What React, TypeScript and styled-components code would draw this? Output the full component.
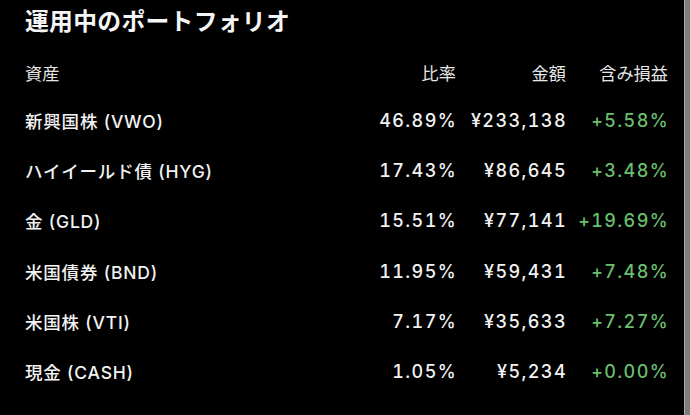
import React from "react";
import styled, { createGlobalStyle } from "styled-components";

const Global = createGlobalStyle`
  html, body {
    margin: 0;
    padding: 0;
    background: #000;
  }
  body {
    font-family: Inter, "Noto Sans CJK JP", sans-serif;
    color: #f2f2f2;
  }
`;

const Screen = styled.div`
  display: flex;
  width: 690px;
  height: 415px;
  background: #000;
  overflow: hidden;
`;

const Content = styled.main`
  flex: 1;
  padding: 6px 15px 0 25px;
`;

const ScrollTrack = styled.div`
  width: 5px;
  height: 100%;
  background: #7d7d7d;
  border-left: 1px solid #a8a8a8;
`;

const Title = styled.h1`
  margin: 0;
  font-size: 23.8px;
  line-height: 32px;
  font-weight: 700;
  color: #f5f5f5;
  letter-spacing: 0.3px;
`;

const Table = styled.div`
  margin-top: 12px;
  display: grid;
  grid-template-columns: 1fr 112px 110px 102px;
  grid-template-rows: 45px;
  grid-auto-rows: 50.3px;
  align-items: center;
`;

const HeadCell = styled.div<{ $right?: boolean }>`
  font-size: 17.2px;
  color: #e6e6e6;
  text-align: ${(p) => (p.$right ? "right" : "left")};
  padding-right: ${(p) => (p.$right ? "1px" : "0")};
  white-space: nowrap;
`;

const NameCell = styled.div`
  font-size: 17.5px;
  font-weight: 500;
  letter-spacing: 0.8px;
  color: #f2f2f2;
  white-space: nowrap;
`;

const NumCell = styled.div<{ $gain?: boolean }>`
  font-size: 18px;
  font-weight: 500;
  font-variant-numeric: tabular-nums;
  letter-spacing: 1.4px;
  text-align: right;
  white-space: nowrap;
  color: ${(p) => (p.$gain ? "#6abf6e" : "#f2f2f2")};
`;

const rows = [
  { name: "新興国株 (VWO)", ratio: "46.89%", amount: "¥233,138", gain: "+5.58%" },
  { name: "ハイイールド債 (HYG)", ratio: "17.43%", amount: "¥86,645", gain: "+3.48%" },
  { name: "金 (GLD)", ratio: "15.51%", amount: "¥77,141", gain: "+19.69%" },
  { name: "米国債券 (BND)", ratio: "11.95%", amount: "¥59,431", gain: "+7.48%" },
  { name: "米国株 (VTI)", ratio: "7.17%", amount: "¥35,633", gain: "+7.27%" },
  { name: "現金 (CASH)", ratio: "1.05%", amount: "¥5,234", gain: "+0.00%" },
];

export default function App() {
  return (
    <>
      <Global />
      <Screen>
        <Content>
          <Title>運用中のポートフォリオ</Title>
          <Table>
            <HeadCell>資産</HeadCell>
            <HeadCell $right>比率</HeadCell>
            <HeadCell $right>金額</HeadCell>
            <HeadCell $right>含み損益</HeadCell>
            {rows.map((r) => (
              <React.Fragment key={r.name}>
                <NameCell>{r.name}</NameCell>
                <NumCell>{r.ratio}</NumCell>
                <NumCell>{r.amount}</NumCell>
                <NumCell $gain>{r.gain}</NumCell>
              </React.Fragment>
            ))}
          </Table>
        </Content>
        <ScrollTrack />
      </Screen>
    </>
  );
}
